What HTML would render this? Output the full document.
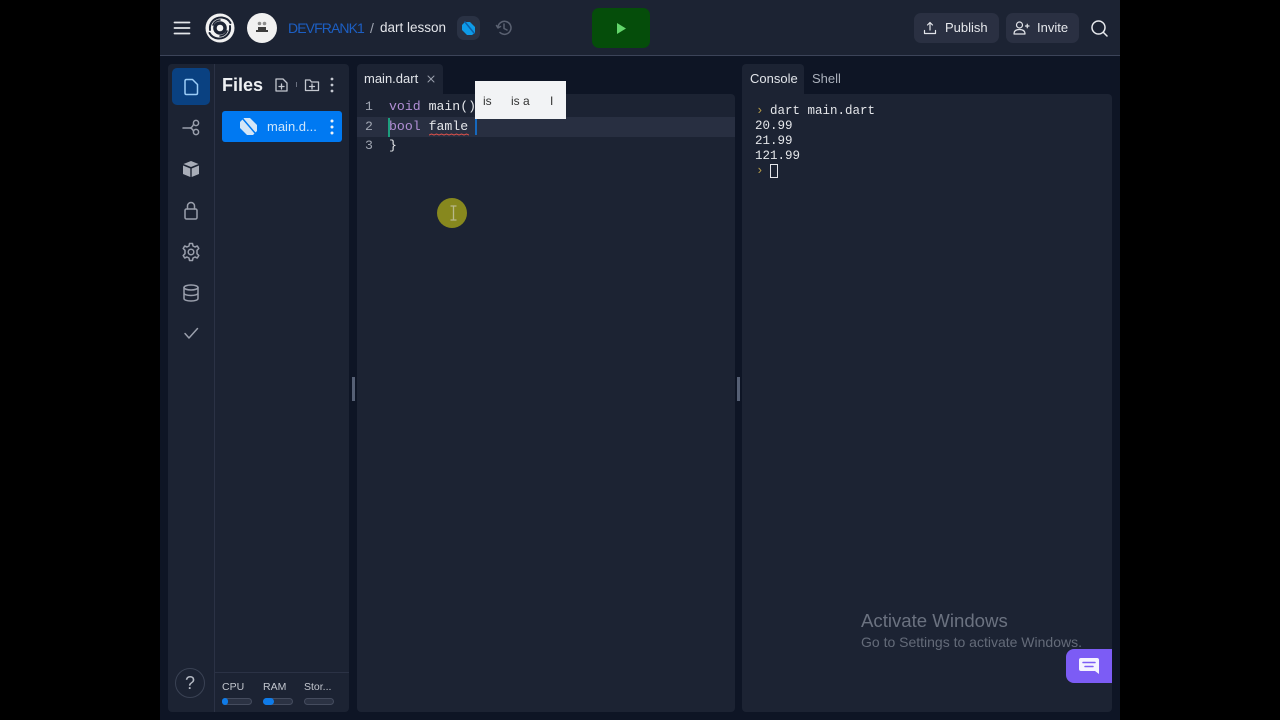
<!DOCTYPE html>
<html><head><meta charset="utf-8"><style>
html,body{margin:0;padding:0;width:1280px;height:720px;background:#000;overflow:hidden}
div,span,svg{position:absolute;box-sizing:border-box}
.t{white-space:nowrap;font-family:"Liberation Sans",sans-serif;color:#e6e8ec;line-height:1;filter:blur(.25px)}
.m{white-space:nowrap;font-family:"Liberation Mono",monospace;line-height:1;filter:blur(.25px)}
svg{fill:none;stroke:#9a9fac;stroke-width:1.500;stroke-linecap:round;stroke-linejoin:round}
.bar{width:30px;height:7px;top:698px;border-radius:4px;background:#2b3243;border:1px solid #454c5e}
.fill{height:7px;top:698px;border-radius:4px;background:#0f7be8}
</style></head><body>
<div style="left:160px;top:0;width:960px;height:720px;background:#0e1525"></div>
<div style="left:160px;top:0;width:960px;height:55px;background:#1c2333"></div>
<div style="left:160px;top:55px;width:960px;height:1px;background:#3c4459"></div>

<!-- topbar -->
<svg style="left:173px;top:20px" width="18" height="16" viewBox="0 0 18 16"><path d="M1.500 2.500H16.500M1.500 8H16.500M1.500 13.500H16.500" stroke="#e4e6ea" stroke-width="1.800"/></svg>
<svg style="left:205px;top:13px" width="30" height="30" viewBox="0 0 30 30"><circle cx="15" cy="15" r="14.500" fill="#f2f2f2" stroke="none"/><circle cx="15" cy="15" r="6.800" fill="#1c2333" stroke="none"/><circle cx="15" cy="15" r="3.300" fill="#f2f2f2" stroke="none"/><path d="M5 17C4 9 10 4 17 4.500C21 5 24 7 25.500 10" stroke="#1c2333" stroke-width="2"/><path d="M25 13C26 21 20 26 13 25.500C9 25 6 23 4.500 20" stroke="#1c2333" stroke-width="2"/><path d="M8 12C9 9 12 7 15 7M22 18C21 21 18 23 15 23" stroke="#1c2333" stroke-width="1.600"/></svg>
<div style="left:247px;top:13px;width:30px;height:30px;border-radius:50%;background:#f1f1f1"></div>
<svg style="left:254px;top:20px" width="16" height="16" viewBox="0 0 16 16"><circle cx="5.500" cy="3.500" r="1.800" fill="#8d8d8d" stroke="none"/><circle cx="10.500" cy="3.500" r="1.800" fill="#8d8d8d" stroke="none"/><path d="M4 7H12V10H14V12H2V10H4Z" fill="#3d3d3d" stroke="none"/></svg>
<div class="t" style="left:288px;top:21px;font-size:14px;color:#1c5fc4;letter-spacing:-.9px">DEVFRANK1</div>
<div class="t" style="left:370px;top:21px;font-size:14px;color:#a0a6b2">/</div>
<div class="t" style="left:380px;top:21px;font-size:13.500px;color:#e3e5ea">dart lesson</div>
<div style="left:457px;top:16px;width:23px;height:24px;border-radius:7px;background:#2a3244"></div>
<svg style="left:461px;top:21px" width="15" height="15" viewBox="0 0 15 15"><path d="M4 1H9L14 6V12L11 14H6L1 9V4Z" fill="#0e9be8" stroke="none"/><path d="M4 1L13 12" stroke="#0b5fa8" stroke-width="1.500"/></svg>
<svg style="left:495px;top:19px" width="18" height="18" viewBox="0 0 18 18"><path d="M3 9A6.500 6.500 0 1 1 5 13.500M1.500 6.500L3 9L5.500 7.500M9 5V9.500L12 11" stroke="#5a6171"/></svg>

<div style="left:592px;top:8px;width:58px;height:40px;border-radius:7px;background:#054d0a"></div>
<svg style="left:615px;top:22px" width="12" height="13" viewBox="0 0 12 13"><path d="M2 1L11 6.500L2 12Z" fill="#63d66b" stroke="none"/></svg>

<div style="left:914px;top:13px;width:85px;height:30px;border-radius:7px;background:#2a3042"></div>
<svg style="left:923px;top:21px" width="14" height="14" viewBox="0 0 14 14"><path d="M7 9V1.500M4.500 4L7 1.500L9.500 4M1.500 9.500V12.500H12.500V9.500" stroke="#e2e4e9" stroke-width="1.200"/></svg>
<div class="t" style="left:945px;top:21px;font-size:13px">Publish</div>
<div style="left:1006px;top:13px;width:73px;height:30px;border-radius:7px;background:#2a3042"></div>
<svg style="left:1013px;top:20px" width="17" height="16" viewBox="0 0 17 16"><circle cx="6.500" cy="5" r="3" stroke="#e2e4e9" stroke-width="1.200"/><path d="M1 14C1 10 4 9.500 6.500 9.500C9 9.500 12 10 12 14ZM12.500 6H16M14.250 4.250V7.750" stroke="#e2e4e9" stroke-width="1.200"/></svg>
<div class="t" style="left:1037px;top:21px;font-size:13px">Invite</div>
<svg style="left:1090px;top:19px" width="18" height="18" viewBox="0 0 18 18"><circle cx="8.500" cy="8.500" r="6.500" stroke="#e8eaee" stroke-width="1.500"/><path d="M13.500 13.500L17 17" stroke="#e8eaee" stroke-width="1.500"/></svg>

<!-- left panel -->
<div style="left:168px;top:64px;width:181px;height:648px;border-radius:4px;background:#1c2333"></div>
<div style="left:214px;top:64px;width:1px;height:648px;background:#2b3245"></div>
<div style="left:172px;top:68px;width:38px;height:37px;border-radius:5px;background:#0a4181"></div>
<svg style="left:183px;top:78px" width="16" height="18" viewBox="0 0 16 18"><path d="M2 3Q2 1.500 3.500 1.500H9.500L14.500 6.500V15Q14.500 16.500 13 16.500H3.500Q2 16.500 2 15Z" stroke="#9ccdf8" stroke-width="1.500"/></svg>
<svg style="left:182px;top:118px" width="19" height="19" viewBox="0 0 19 19"><path d="M1 10H7.500M7.500 10Q10 10 11.500 6.500M7.500 10Q10 10 11.500 13"/><circle cx="14" cy="5" r="2.600"/><circle cx="14" cy="14" r="2.600"/></svg>
<svg style="left:182px;top:160px" width="18" height="18" viewBox="0 0 18 18"><path d="M9 1L16.500 4L9 7L1.500 4Z" fill="#a8adb8" stroke="none"/><path d="M1 5.500L8.300 8.500V17L1 14Z" fill="#a8adb8" stroke="none"/><path d="M17 5.500L9.700 8.500V17L17 14Z" fill="#a8adb8" stroke="none"/></svg>
<svg style="left:183px;top:201px" width="16" height="19" viewBox="0 0 16 19"><rect x="2" y="8" width="12" height="10" rx="1.500"/><path d="M4.500 8V5A3.500 3.500 0 0 1 11.500 5V8"/></svg>
<svg style="left:181px;top:242px" width="20" height="20" viewBox="0 0 20 20"><circle cx="10" cy="10" r="2.800"/><path d="M8.500 1.500H11.500L12 4L14 5L16.300 4L17.800 6.500L16 8.300V11.700L17.800 13.500L16.300 16L14 15L12 16L11.500 18.500H8.500L8 16L6 15L3.700 16L2.200 13.500L4 11.700V8.300L2.200 6.500L3.700 4L6 5L8 4Z"/></svg>
<svg style="left:182px;top:284px" width="18" height="18" viewBox="0 0 18 18"><ellipse cx="9" cy="3.500" rx="7" ry="2.500"/><path d="M2 3.500V14.500C2 16 5 17 9 17C13 17 16 16 16 14.500V3.500M2 9C2 10.500 5 11.500 9 11.500C13 11.500 16 10.500 16 9"/></svg>
<svg style="left:183px;top:326px" width="16" height="14" viewBox="0 0 16 14"><path d="M2 7.500L6 12L14.500 2.500"/></svg>
<div style="left:175px;top:668px;width:30px;height:30px;border-radius:50%;border:1px solid #3a4254"></div>
<div class="t" style="left:185px;top:674px;font-size:18px;color:#b5bac4">?</div>

<div class="t" style="left:222px;top:76px;font-size:18px;font-weight:bold;color:#eef0f3">Files</div>
<svg style="left:274px;top:77px" width="15" height="16" viewBox="0 0 15 16"><path d="M2 2H9L13 6V14H2ZM7.500 7V12M5 9.500H10" stroke="#c4c8d0" stroke-width="1.300"/></svg>
<div style="left:296px;top:82px;width:1px;height:5px;background:#6a7080"></div>
<svg style="left:304px;top:77px" width="16" height="16" viewBox="0 0 16 16"><path d="M1.500 3H6L7.500 5H14.500V13.500H1.500ZM8 7V12M5.500 9.500H10.500" stroke="#c4c8d0" stroke-width="1.300"/></svg>
<svg style="left:328px;top:77px" width="8" height="16" viewBox="0 0 8 16"><circle cx="4" cy="2" r="1.400" fill="#c4c8d0" stroke="none"/><circle cx="4" cy="8" r="1.400" fill="#c4c8d0" stroke="none"/><circle cx="4" cy="14" r="1.400" fill="#c4c8d0" stroke="none"/></svg>

<div style="left:222px;top:111px;width:120px;height:31px;border-radius:3px;background:#0079f2"></div>
<svg style="left:239px;top:117px" width="19" height="19" viewBox="0 0 19 19"><path d="M5 1H11L18 8V14L14 18H8L1 11V5Z" fill="#d4e6f7" stroke="none"/><path d="M4 2L16 16" stroke="#0079f2" stroke-width="1.500"/></svg>
<div class="t" style="left:267px;top:120px;font-size:13px;color:#cfe6fb">main.d...</div>
<svg style="left:328px;top:119px" width="8" height="16" viewBox="0 0 8 16"><circle cx="4" cy="2" r="1.500" fill="#f0f4f8" stroke="none"/><circle cx="4" cy="8" r="1.500" fill="#f0f4f8" stroke="none"/><circle cx="4" cy="14" r="1.500" fill="#f0f4f8" stroke="none"/></svg>

<div style="left:215px;top:672px;width:134px;height:1px;background:#2b3245"></div>
<div class="t" style="left:222px;top:682px;font-size:10.500px;color:#c2c6ce">CPU</div>
<div class="t" style="left:263px;top:682px;font-size:10.500px;color:#c2c6ce">RAM</div>
<div class="t" style="left:304px;top:682px;font-size:10.500px;color:#c2c6ce">Stor...</div>
<div class="bar" style="left:222px"></div>
<div class="fill" style="left:222px;width:6px"></div>
<div class="bar" style="left:263px"></div>
<div class="fill" style="left:263px;width:11px"></div>
<div class="bar" style="left:304px"></div>

<!-- handles -->
<div style="left:352px;top:377px;width:3px;height:24px;background:#566075"></div>
<div style="left:737px;top:377px;width:3px;height:24px;background:#566075"></div>

<!-- editor -->
<div style="left:357px;top:64px;width:86px;height:31px;border-radius:4px 4px 0 0;background:#1c2333"></div>
<div style="left:357px;top:94px;width:378px;height:618px;border-radius:0 4px 4px 4px;background:#1c2333"></div>
<div class="t" style="left:364px;top:72px;font-size:13px;color:#e2e5ea">main.dart</div>
<svg style="left:427px;top:75px" width="8" height="8" viewBox="0 0 8 8"><path d="M1 1L7 7M7 1L1 7" stroke="#9aa0ad" stroke-width="1"/></svg>
<div style="left:357px;top:117px;width:378px;height:20px;background:#282f41"></div>
<div class="m" style="left:365px;top:100px;font-size:13.200px;color:#a0a6b2">1</div>
<div class="m" style="left:365px;top:120px;font-size:13.200px;color:#a0a6b2">2</div>
<div class="m" style="left:365px;top:139px;font-size:13.200px;color:#a0a6b2">3</div>
<div class="m" style="left:389px;top:100px;font-size:13.200px;color:#e4e6ea"><span style="position:static;color:#b28fd6">void</span> main()</div>
<div class="m" style="left:389px;top:120px;font-size:13.200px;color:#e4e6ea"><span style="position:static;color:#b28fd6">bool</span> famle</div>
<div class="m" style="left:389px;top:139px;font-size:13.200px;color:#e4e6ea">}</div>
<div style="left:388px;top:118px;width:2px;height:19px;background:#1d9e7e"></div>
<div style="left:475px;top:119px;width:2px;height:16px;background:#1668bd"></div>
<svg style="left:429px;top:133px" width="40" height="3" viewBox="0 0 40 3"><path d="M0 2L2.500 1L5 2L7.500 1L10 2L12.500 1L15 2L17.500 1L20 2L22.500 1L25 2L27.500 1L30 2L32.500 1L35 2L37.500 1L40 2" stroke="#d8504a" stroke-width="1"/></svg>

<!-- suggestions -->
<div style="left:475px;top:81px;width:91px;height:38px;background:#f2f3f5"></div>
<div class="t" style="left:483px;top:95px;font-size:12px;color:#333">is</div>
<div class="t" style="left:511px;top:95px;font-size:12px;color:#333">is a</div>
<div class="t" style="left:550px;top:95px;font-size:12px;color:#333">I</div>

<!-- cursor highlight -->
<div style="left:437px;top:198px;width:30px;height:30px;border-radius:50%;background:#87881e"></div>
<svg style="left:450px;top:205px" width="7" height="16" viewBox="0 0 7 16"><path d="M1 1H6M3.500 1V15M1 15H6" stroke="#b8b88a" stroke-width="1.300"/></svg>

<!-- console -->
<div style="left:742px;top:64px;width:62px;height:31px;border-radius:4px 4px 0 0;background:#1c2333"></div>
<div style="left:742px;top:94px;width:370px;height:618px;border-radius:0 4px 4px 4px;background:#1c2333"></div>
<div class="t" style="left:750px;top:72px;font-size:13px;color:#e2e5ea">Console</div>
<div class="t" style="left:812px;top:72px;font-size:13px;color:#aab0bb">Shell</div>
<div class="m" style="left:756px;top:105px;font-size:12.500px;color:#b39a4a">›</div>
<div class="m" style="left:770px;top:105px;font-size:12.500px;color:#e4e6ea">dart main.dart</div>
<div class="m" style="left:755px;top:120px;font-size:12.500px;color:#e4e6ea">20.99</div>
<div class="m" style="left:755px;top:135px;font-size:12.500px;color:#e4e6ea">21.99</div>
<div class="m" style="left:755px;top:150px;font-size:12.500px;color:#e4e6ea">121.99</div>
<div class="m" style="left:756px;top:165px;font-size:12.500px;color:#b39a4a">›</div>
<div style="left:770px;top:164px;width:8px;height:14px;border:1px solid #e4e6ea"></div>

<div class="t" style="left:861px;top:612px;font-size:18.600px;color:#6b7280">Activate Windows</div>
<div class="t" style="left:861px;top:635px;font-size:14px;color:#646b79">Go to Settings to activate Windows.</div>

<div style="left:1066px;top:649px;width:46px;height:34px;border-radius:8px 0 0 8px;background:#7c5cf5"></div>
<svg style="left:1079px;top:658px" width="20" height="17" viewBox="0 0 20 17"><path d="M2 0H18Q20 0 20 2V16L16 13H2Q0 13 0 11V2Q0 0 2 0Z" fill="#f4f2ff" stroke="none"/><path d="M4 4.500H16M6 8.500H14" stroke="#7c5cf5" stroke-width="1.500"/></svg>
</body></html>
